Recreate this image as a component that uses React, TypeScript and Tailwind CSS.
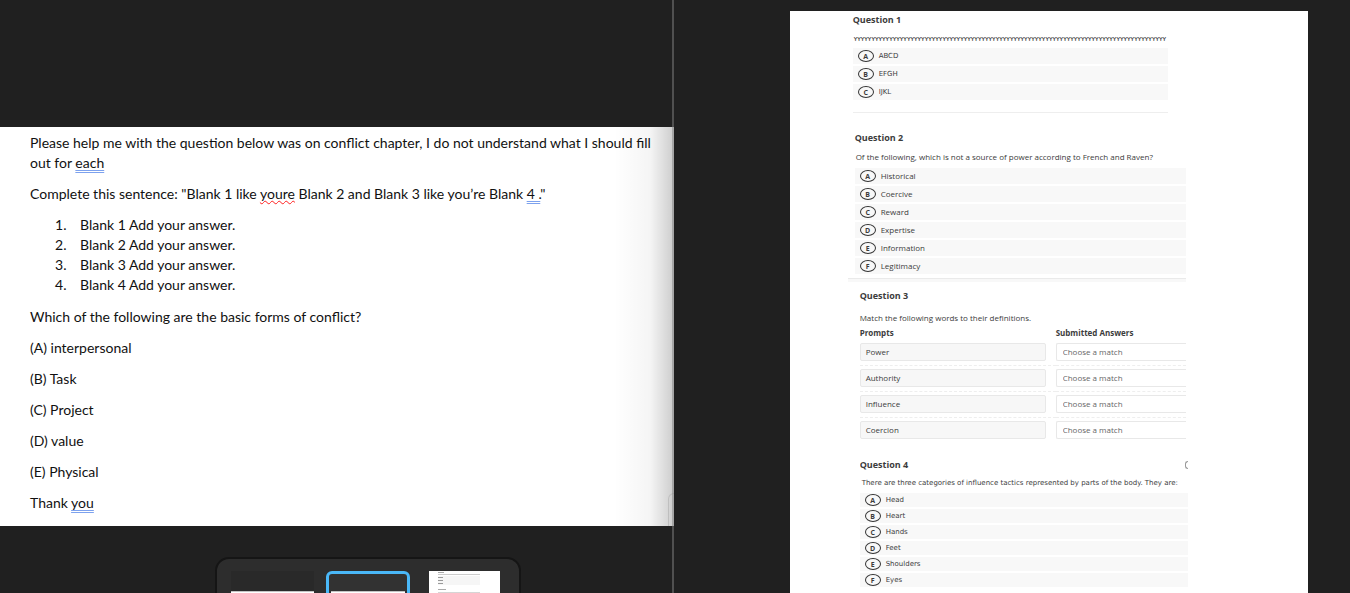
import type { ReactNode } from 'react'

const letters = ['A', 'B', 'C', 'D', 'E', 'F']

const blanks = [1, 2, 3, 4]

const forms = ['(A) interpersonal', '(B) Task', '(C) Project', '(D) value', '(E) Physical']

const prompts = ['Power', 'Authority', 'Influence', 'Coercion']

function Grammar({ children }: { children: ReactNode }) {
  return (
    <span className="underline decoration-[#7da2ee] decoration-double decoration-1 underline-offset-2 [text-decoration-skip-ink:none]">
      {children}
    </span>
  )
}

function Misspelled({ children }: { children: ReactNode }) {
  return (
    <span className="underline decoration-[#ff2020] decoration-wavy decoration-1 underline-offset-1 [text-decoration-skip-ink:none]">
      {children}
    </span>
  )
}

function NoteDocument() {
  return (
    <article className="relative h-[399px] shrink-0 overflow-hidden bg-white pl-[30px] pt-[6px] font-['Lato','Liberation_Sans',sans-serif] text-[14px] leading-[20px] text-[#111]">
      <div className="space-y-[11px]">
        <p>
          Please help me with the question below was on conflict chapter, I do not understand what I should fill
          <br />
          out for <Grammar>each</Grammar>
        </p>
        <p>
          Complete this sentence: "Blank 1 like <Misspelled>youre</Misspelled> Blank 2 and Blank 3 like you’re Blank{' '}
          <Grammar>4 .</Grammar>"
        </p>
        <ol className="pb-px pl-[25px]">
          {blanks.map((n) => (
            <li key={n} className="flex">
              <span className="w-[25px]">{n}.</span>
              <span>Blank {n} Add your answer.</span>
            </li>
          ))}
        </ol>
        <p>Which of the following are the basic forms of conflict?</p>
        {forms.map((form) => (
          <p key={form}>{form}</p>
        ))}
        <p>
          Thank <Grammar>you</Grammar>
        </p>
      </div>
      <div className="absolute inset-y-0 right-0 w-[60px] bg-linear-to-r from-transparent via-black/4 via-60% to-black/20" />
      <div className="absolute bottom-0 right-0 h-[33px] w-[6px] rounded-tl-md border-l border-t border-black/10" />
    </article>
  )
}

function Filmstrip() {
  return (
    <nav
      aria-label="Pages"
      className="ml-[215px] mt-[31px] flex h-20 w-[306px] shrink-0 items-start rounded-t-[14px] border-2 border-[#151515] bg-[#2d2d2d] pl-[14px] pt-[12px]"
    >
      <button aria-label="Page 1" className="flex h-16 w-[83px] flex-col bg-[#292929] pt-[20px]">
        <span className="h-10 w-full border-t border-[#c4c4c4] bg-white" />
      </button>
      <button
        aria-label="Page 2"
        className="ml-[12px] flex h-16 w-[84px] flex-col rounded-md border-3 border-[#4ab8f8] bg-[#323232] px-[2px] pt-[17px]"
      >
        <span className="h-10 w-full border-t border-[#c4c4c4] bg-white" />
      </button>
      <button aria-label="Page 3" className="ml-[19px] flex h-16 w-[71px] flex-col bg-white px-[9px]">
        <span className="mt-px h-px w-[6px] bg-[#aaa]" />
        <span className="mt-px h-px w-[42px] bg-[#ccc]" />
        <span className="mt-px flex h-[9px] w-[42px] flex-col gap-[2px] bg-[#f6f6f6] pt-px">
          <span className="h-px w-[5px] bg-[#999]" />
          <span className="h-px w-[5px] bg-[#999]" />
          <span className="h-px w-[5px] bg-[#999]" />
        </span>
        <span className="mt-[4px] h-px w-[8px] bg-[#aaa]" />
        <span className="mt-[2px] h-px w-[42px] bg-[#d5d5d5]" />
      </button>
    </nav>
  )
}

type OptionsProps = {
  items: string[]
  rowClass: string
}

function Options({ items, rowClass }: OptionsProps) {
  return (
    <ul className="flex flex-col gap-[2px]">
      {items.map((item, i) => (
        <li key={item}>
          <button className={`flex w-full items-center gap-[5px] bg-[#f8f8f8] pl-[5px] text-left ${rowClass}`}>
            <span className="flex h-[12px] w-[16px] items-center justify-center rounded-[50%] border border-[#333] font-['Open_Sans',sans-serif] text-[7px] font-bold leading-none">
              {letters[i]}
            </span>
            <span>{item}</span>
          </button>
        </li>
      ))}
    </ul>
  )
}

function MatchTable() {
  return (
    <table className="w-full table-fixed border-collapse text-left">
      <thead>
        <tr className="h-[12px] leading-[12px]">
          <th className="w-[196px] font-bold">Prompts</th>
          <th className="font-bold">Submitted Answers</th>
        </tr>
      </thead>
      <tbody>
        {prompts.map((prompt) => (
          <tr key={prompt} className="border-b border-dashed border-[#eee] last:border-0">
            <td className="h-[26px] pr-[10px]">
              <div className="h-[18px] rounded-xs border border-[#e8e8e8] bg-[#f7f7f7] pl-[5px] leading-[16px]">
                {prompt}
              </div>
            </td>
            <td className="h-[26px]">
              <select
                aria-label={`Match for ${prompt}`}
                className="block h-[18px] w-full appearance-none rounded-l-xs border border-r-0 border-[#e8e8e8] bg-white pl-[6px] leading-[16px] text-[#666]"
              >
                <option>Choose a match</option>
              </select>
            </td>
          </tr>
        ))}
      </tbody>
    </table>
  )
}

function QuizPage() {
  return (
    <article className="ml-[116px] mr-[42px] mt-[11px] h-[640px] bg-white pl-[58px] font-['Open_Sans','Noto_Sans',sans-serif] text-[8px] leading-[12px] text-[#3c3c3c]">
      <section className="ml-[5px] w-[315px] border-b border-[#eee] pb-[12px] pt-[3px]">
        <h2 className="text-[9px] font-bold">Question 1</h2>
        <p className="mt-[7px] whitespace-nowrap pl-px text-[6px] font-semibold">{'Y'.repeat(88)}</p>
        <div className="mt-[3px]">
          <Options items={['ABCD', 'EFGH', 'IJKL']} rowClass="h-[16px] font-['DejaVu_Sans',sans-serif] text-[7px]" />
        </div>
      </section>

      <section className="ml-[7px] w-[331px] pt-[19px]">
        <h2 className="text-[9px] font-bold">Question 2</h2>
        <p className="mt-[7px] whitespace-nowrap pl-px">
          Of the following, which is not a source of power according to French and Raven?
        </p>
        <div className="mt-[5px]">
          <Options
            items={['Historical', 'Coercive', 'Reward', 'Expertise', 'Information', 'Legitimacy']}
            rowClass="h-[16px]"
          />
        </div>
      </section>
      <div className="mt-[4px] h-[4px] w-[338px] border-t border-[#eaeaea] bg-[#f8f8f8]" />

      <section className="ml-[12px] w-[326px] pt-[8px]">
        <h2 className="text-[9px] font-bold">Question 3</h2>
        <p className="mb-[3px] mt-[10px]">Match the following words to their definitions.</p>
        <MatchTable />
      </section>

      <section className="ml-[12px] w-[328px] pt-[16px]">
        <div className="flex justify-between overflow-hidden">
          <h2 className="text-[9px] font-bold">Question 4</h2>
          <span className="mt-[2px] h-[8px] w-[3px] rounded-l-full border border-r-0 border-[#999]" />
        </div>
        <p className="mt-[6px] whitespace-nowrap pl-[2px] font-['DejaVu_Sans',sans-serif] text-[7px]">
          There are three categories of influence tactics represented by parts of the body. They are:
        </p>
        <div className="mt-[4px]">
          <Options
            items={['Head', 'Heart', 'Hands', 'Feet', 'Shoulders', 'Eyes']}
            rowClass="h-[14px] font-['DejaVu_Sans',sans-serif] text-[7px]"
          />
        </div>
      </section>
    </article>
  )
}

export default function App() {
  return (
    <main className="flex h-screen overflow-hidden bg-[#202020]">
      <div className="relative flex w-[49.9%] shrink-0 flex-col pt-[127px]">
        <NoteDocument />
        <Filmstrip />
        <div className="absolute inset-y-0 right-0 w-[2px] bg-[#808080]/50" />
      </div>
      <div className="min-w-0 flex-1">
        <QuizPage />
      </div>
    </main>
  )
}
